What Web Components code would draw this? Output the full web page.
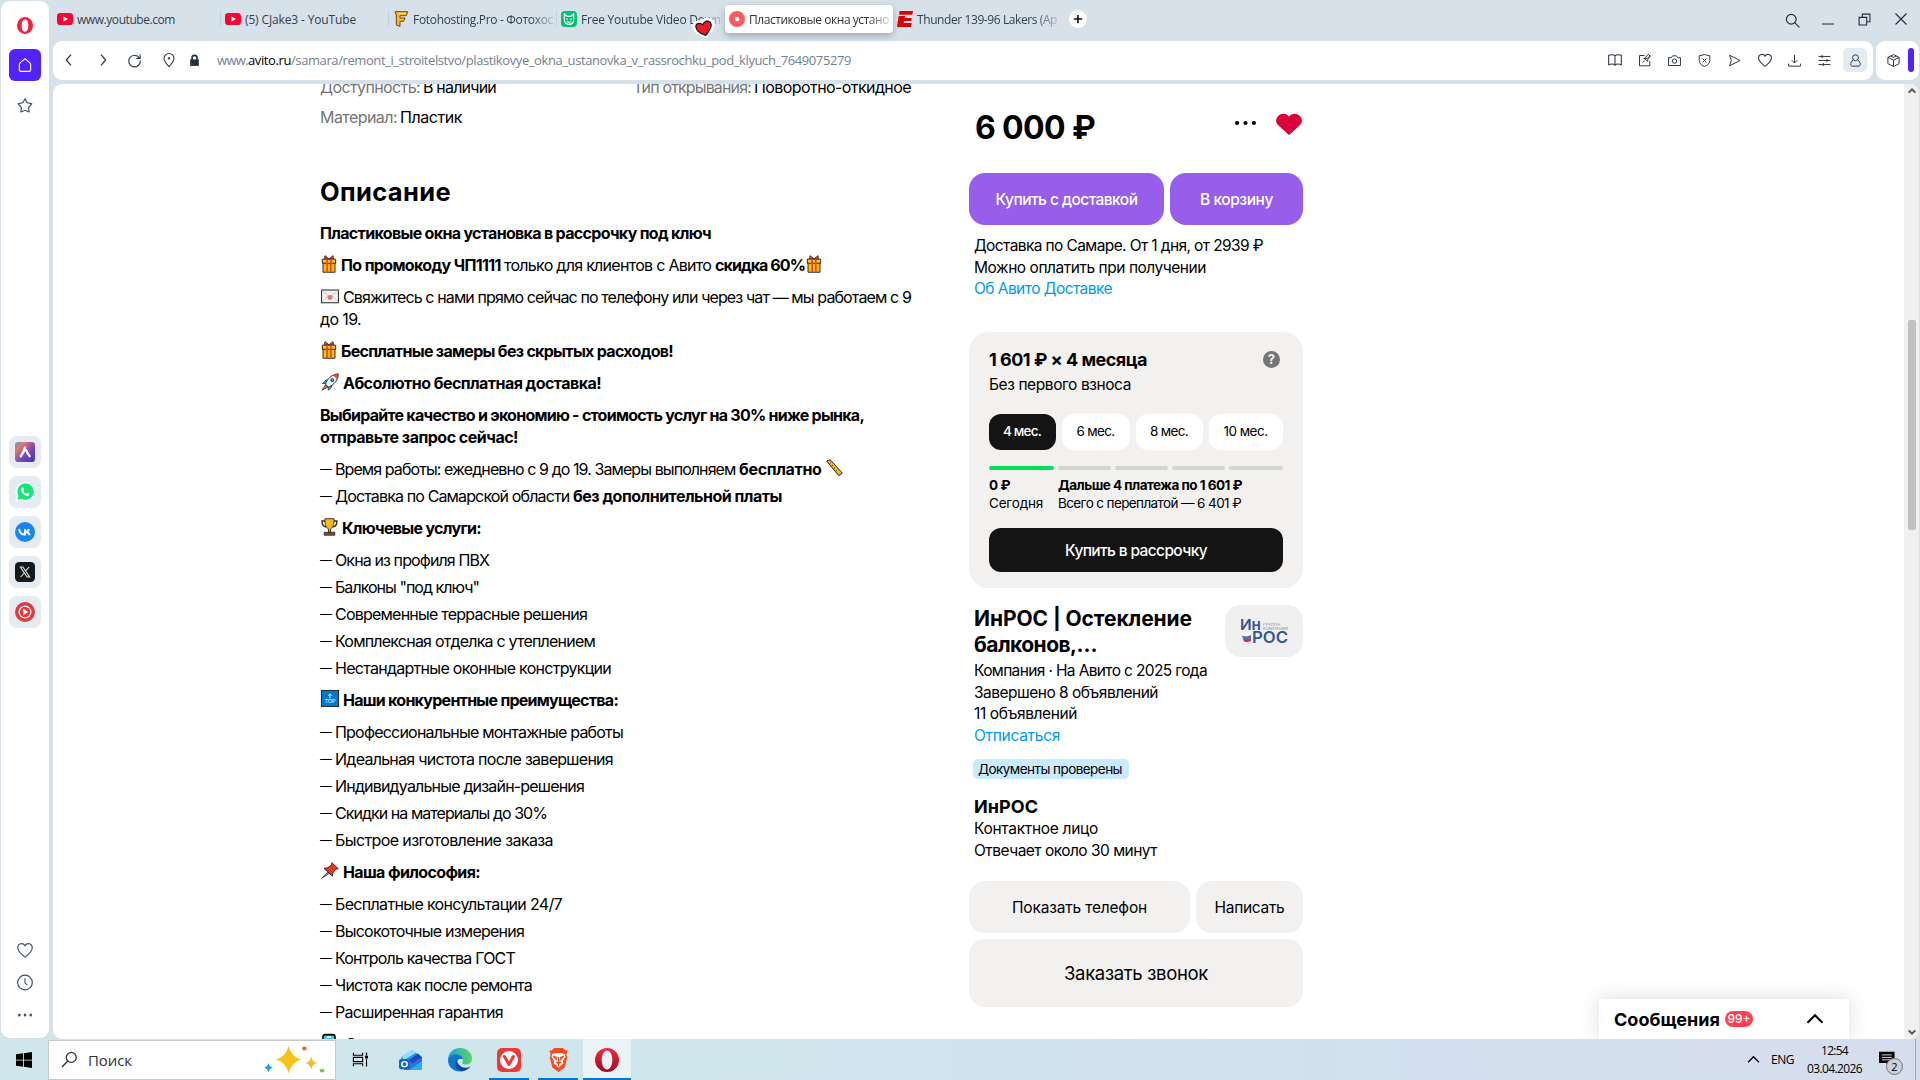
<!DOCTYPE html>
<html lang="ru">
<head>
<meta charset="utf-8">
<title>Пластиковые окна установка в рассрочку под ключ</title>
<style>
  html, body { margin: 0; padding: 0; }
  body {
    width: 1920px;
    height: 1080px;
    overflow: hidden;
    background: #d7e1ea;
    font-family: Inter, "Noto Sans", sans-serif;
    color: #000;
  }
</style>
</head>
<body>
<desktop-screen></desktop-screen>

<script>
//
const UI_FONT = `"Open Sans", "Noto Sans", sans-serif`;

/**
 * Registers an element whose shadow root is cloned from a template
 */
function define(tag, html) {
  const own_template = document.createElement("template");
  own_template.innerHTML = html;
  customElements.define(tag, class extends HTMLElement {
    constructor() {
      super();
      this.attachShadow({ mode: "open" });
    }
    connectedCallback() {
      if (this.shadowRoot.childNodes.length) return;
      this.shadowRoot.appendChild(own_template.content.cloneNode(true));
    }
  });
}

// stroke icons: line art, drawn with currentColor
const LINE = {
  back: `<path d="M15 4 8 12l7 8"/>`,
  forward: `<path d="m9 4 7 8-7 8"/>`,
  reload: `<path d="M19 8.500A8.200 8.200 0 1 0 20.200 12M20 3.500v5.500h-5.500"/>`,
  pin: `<path d="M12 22C8 17.500 4.500 13.800 4.500 9.700a7.500 7.500 0 0 1 15 0C19.500 13.800 16 17.500 12 22z"/><circle cx="12" cy="9.500" r="1" fill="currentColor"/>`,
  book: `<path d="M12 5.500C10 4 5 4 2.500 5v14c3-1 7.500-1 9.500.500zM12 5.500c2-1.500 7-1.500 9.500-.500v14c-3-1-7.500-1-9.500.500z"/>`,
  note: `<path d="M12 4H4v16.500h16.500V13M9 15.500l3.500-3.500M10.500 9l6-.500 4-4M12 8.500l5 5 .500-4.500 4-3.500-3.500-3.500-4 4.500z"/>`,
  camera: `<path d="M2.500 7.500H7L9 4.500h6l2 3h4.500v12.500h-19z" stroke-linejoin="round"/><circle cx="12" cy="13" r="3.500"/>`,
  shield: `<path d="M12 2.500 3.500 4.500V12c0 5 4 8 8.500 9.500 4.500-1.500 8.500-4.500 8.500-9.500V4.500zM9 9l6 6M15 9l-6 6"/>`,
  send: `<path d="M4 3.500 21 12 4 20.500 7 12z" stroke-linejoin="round"/>`,
  heart: `<path d="M12 21.500C8 18.500 2.300 13.700 2.300 8.700A5.200 5.200 0 0 1 12 6.200a5.200 5.200 0 0 1 9.700 2.500c0 5-5.700 9.800-9.700 12.800z"/>`,
  download: `<path d="M12 3v12.500M7.500 11.500 12 16l4.500-4.500M2.500 17v4h19v-4"/>`,
  sliders: `<path d="M2.500 5.500h19M2.500 12h19M2.500 18.500h19M8 3v5M16 9.500v5M10 16v5"/>`,
  user: `<circle cx="12" cy="7.500" r="4.700"/><path d="M8.500 11C5.500 13 4.300 16 4.300 18.500c0 1.500 1 2.500 2.500 2.500h10.400c1.500 0 2.500-1 2.500-2.500 0-2.500-1.200-5.500-4.200-7.500"/>`,
  cube: `<path d="M12 2.500 21 7v10l-9 4.500L3 17V7zM3 7l9 4.500L21 7M12 11.500v10M7.500 4.700 12 7l4.500-2.300" stroke-linejoin="round"/>`,
  search: `<circle cx="10" cy="10" r="7.800"/><path d="m15.500 15.500 7.500 7.500"/>`,
  finder: `<circle cx="14.500" cy="9" r="7"/><path d="M9.500 14 1.500 22.500"/>`,
  minimize: `<path d="M0 22h24"/>`,
  restore: `<path d="M2 8h14v14H2zM8 8V2h14v14h-6"/>`,
  close: `<path d="m1 1 22 22M23 1 1 23"/>`,
  home: `<path d="M12 2.500 5 8.500C4 9.500 3.500 11 3.500 12v7c0 1.500 1 2.500 2.500 2.500h12c1.500 0 2.500-1 2.500-2.500v-7c0-1-.500-2.500-1.500-3.500z" stroke-linejoin="round"/>`,
  star: `<path d="m12 2 3.200 5.800 7 1.600-4.700 5.300.6 7-6.100-2.500-6.100 2.500.6-7-4.700-5.300 7-1.600z" stroke-linejoin="round"/>`,
  clock: `<circle cx="12" cy="12" r="11"/><path d="M12 5.500v7l3.500 3.500"/>`,
  up: `<path d="m2 17 10-10 10 10"/>`,
  taskview: `<path d="M2 2.500v3.500h13V2.500M2 21.500V18h13v3.500M2 9h13v6H2zM20.500 2v4M20.500 11v11"/><path d="M18.500 6.500h4v4h-4z" fill="currentColor" stroke="none"/>`,
};

// filled artwork, with its own colours
const ART = {
  lock: `<path d="M4 10h16v12H4z" fill="#252f3a"/><path d="M7.500 11V7a4.500 4.500 0 0 1 9 0v4" fill="none" stroke="#252f3a" stroke-width="3"/>`,
  dots: `<g fill="#444f5c"><circle cx="3.500" cy="12" r="2"/><circle cx="12" cy="12" r="2"/><circle cx="20.500" cy="12" r="2"/></g>`,
  more: `<g fill="#000"><circle cx="2.400" cy="12" r="2.400"/><circle cx="12" cy="12" r="2.400"/><circle cx="21.600" cy="12" r="2.400"/></g>`,
  like: `<path d="M12 22 1.800 11.900A6 6 0 0 1 1.600 3.600 6.200 6.200 0 0 1 12 3.700a6.200 6.200 0 0 1 10.400-.1 6 6 0 0 1-.2 8.300z" fill="#db0037"/>`,
  opera: `<path fill-rule="evenodd" d="M12 0a12 12 0 1 0 0 24 12 12 0 0 0 0-24zm0 3.200c3 0 5 4 5 8.800s-2 8.800-5 8.800-5-4-5-8.800 2-8.800 5-8.800z" fill="#fa1e3a"/>`,
  operabig: `<defs><linearGradient id="o" x2="0" y2="1"><stop offset="0" stop-color="#f5283c"/><stop offset="1" stop-color="#a5091e"/></linearGradient></defs><path fill-rule="evenodd" d="M12 0a12 12 0 1 0 0 24 12 12 0 0 0 0-24zm0 2.500c3.200 0 5.300 4.300 5.300 9.500s-2.100 9.500-5.300 9.500-5.300-4.300-5.300-9.500S8.800 2.500 12 2.500z" fill="url(#o)"/>`,
  youtube: `<rect y="3" width="24" height="18" rx="5" fill="#ff0033"/><path d="m9.500 8 7 4-7 4z" fill="#fff"/>`,
  foto: `<path d="M3 1h19l-2 6H10.500v3.500H18l-2 5h-5.500V23L5 21V6z" fill="#ffb62e" stroke="#6b4a16" stroke-width="1.500"/><path d="M8.500 4h10" stroke="#ffe19b" stroke-width="1.500"/>`,
  cat: `<rect width="24" height="24" rx="6" fill="#00c26e"/><path d="M5 4l4 4h6l4-4v9c0 5-3 7-7 7s-7-2-7-7z" fill="none" stroke="#fff" stroke-width="1.800" stroke-linejoin="round"/><path d="M9 11v3M15 11v3M9 16c2 1.500 4 1.500 6 0" stroke="#fff" stroke-width="1.600" fill="none"/>`,
  record: `<circle cx="12" cy="12" r="12" fill="#ff5a5f"/><circle cx="12" cy="12" r="3.500" fill="#fff"/>`,
  espn: `<path d="M4 0h20l-1 5.500H3zM2.500 7.500H12l-.500 3H22l-.800 4.500H10.500l-.500 3h12L21 24H0z" fill="#d00"/>`,
  plus: `<circle cx="12" cy="12" r="12" fill="#fff"/><path d="M12 6.500v11M6.500 12h11" stroke="#111" stroke-width="2.200"/>`,
  cursor: `<path d="M12 22C5 18 1 12.500 2 7.500 3 3 9 2.500 11.500 6 14 1.500 20 1.500 22 6c2 5-4 11.500-10 16z" transform="rotate(-12 12 12)" fill="#fff" stroke="#fff" stroke-width="4" stroke-linejoin="round"/><path d="M12 21C6 17 3 12 3.800 8 5 4.500 9 4.500 11.500 8 14 3.500 18.500 3.500 20.200 7c1.500 4-3 9.500-8.200 14z" transform="rotate(-12 12 12)" fill="#ed1c24" stroke="#2b1114" stroke-width="1.500"/>`,
  aria: `<defs><linearGradient id="a" x2="1" y2="1"><stop offset="0" stop-color="#5a9dde"/><stop offset=".25" stop-color="#df796b"/><stop offset=".6" stop-color="#7746c2"/><stop offset="1" stop-color="#3c3caa"/></linearGradient></defs><rect width="24" height="24" rx="4" fill="url(#a)"/><path d="M12 6.500 10.500 11 7 17M13.500 10l1.500 3.500 2.500 3.500" fill="none" stroke="#fff" stroke-width="2.800" stroke-linecap="round"/>`,
  whatsapp: `<path d="M.5 23.800 2 17.500A11.700 11.700 0 1 1 7 22.200z" fill="#fff"/><path d="m4 20.500 1-4A8.900 8.900 0 1 1 8.300 19.700z" fill="#15e776"/><path d="M2.800 21.200 4.200 16.300A9.800 9.800 0 1 1 8 20z" fill="#15e776"/><path d="M8.500 6.500 7 8.500c.500 4.500 4 8 8.500 8.500l2-2.500-3-1.700-1.500 1.200c-1.500-.800-2.500-1.800-3-3.200L11.200 9.500 10 6.500z" fill="#fff"/>`,
  vk: `<circle cx="12" cy="12" r="12" fill="#1586f7"/><path d="M5 8.500c.500 4.500 3 6.500 7 6.500V8.500M12 12c2.500 0 4-1.500 4.800-3.500M13 12c2.500.200 3.800 1.500 4.800 3.800" fill="none" stroke="#fff" stroke-width="2.400"/>`,
  xcom: `<rect width="24" height="24" rx="5" fill="#16181b"/><path d="M6.500 6h3l8 12h-3zM17 6l-4.500 5M11 13.500 6.700 18" fill="none" stroke="#e5e7ea" stroke-width="1.300"/>`,
  ytmusic: `<circle cx="12" cy="12" r="12" fill="#e13b42"/><circle cx="12" cy="12" r="7" fill="none" stroke="#fff" stroke-width="1.500"/><path d="m9.800 8 6 4-6 4z" fill="#fff"/>`,
  windows: `<path d="M0 3.500 10.500 2v9.500H0zM11.800 1.800 24 0v11.500H11.800zM0 12.700h10.500V22.200L0 20.700zM11.800 12.700H24V24l-12.200-1.800z" fill="#000"/>`,
  outlook: `<defs><linearGradient id="l" x2="1" y2="1"><stop offset="0" stop-color="#4bb3f6"/><stop offset="1" stop-color="#105bd8"/></linearGradient></defs><path d="M2 9 13 1l10 8v12a2 2 0 0 1-2 2H5z" fill="url(#l)"/><path d="m3 8 10-7 4 3-12 8z" fill="#8fdcff"/><path d="m10 12 9-7 4 4-10 7z" fill="#1d49bd"/><path d="m10 23 13-10v8a2 2 0 0 1-2 2z" fill="#32a8f5"/><rect y="11" width="11" height="11" rx="2" fill="#0b67d2"/><circle cx="5.500" cy="16.500" r="2.700" fill="none" stroke="#fff" stroke-width="1.500"/>`,
  edge: `<defs><linearGradient id="e" x2="1"><stop offset="0" stop-color="#1ba0dc"/><stop offset="1" stop-color="#5cd65a"/></linearGradient></defs><path d="M0 12C0 5 5 0 12 0s12 5 12 10.500c0 4-3 6-6.300 6-3.200 0-3.700-1.200-3.400-2C16.500 11 14 8 10 8 5 8 1 11 0 12z" fill="url(#e)"/><path d="M0 12c1-4 5-6 9-5.500 4 .500 6 3 6 5-3-2-6 0-6 3.500 0 4 4 7.500 8.500 7C11 26 0 22 0 12z" fill="#0e76cf"/><path d="M8.500 11.500c-3 6 1 12 7 11.500 3-.500 5.500-2.500 7-4.500-5 2.500-12 1.500-14-7z" fill="#12459c"/>`,
  vivaldi: `<rect width="24" height="24" rx="5" fill="#ef3939"/><circle cx="12" cy="12" r="9" fill="#fff"/><path d="m7.500 8.500 4.500 8 3.500-6.500" fill="none" stroke="#ef3939" stroke-width="3" stroke-linecap="round" stroke-linejoin="round"/><circle cx="16.200" cy="8.700" r="1.700" fill="#ef3939"/>`,
  brave: `<path d="m7 0-3 2.500H1.500L3 6.500l-1 3 3 10L12 24l7-4.500 3-10-1-3 1.500-4H20L17 0z" fill="#fb4c1e"/><path d="m5 6 4-1h6l4 1 1 3-3 4 .500 2.500-3 2L12 20l-2.500-2.500-3-2L7 13 4 9z" fill="#fff"/><path d="m6 8 4 1.500-.500 2zM18 8l-4 1.500.500 2zM12 9v6M9 14l3 2 3-2M12 16v2.500" stroke="#fb4c1e" stroke-width="1.200" fill="#fb4c1e" />`,
  gift: `<path d="M3 9h18v14H3z" fill="#fdb913" stroke="#222" stroke-width="1.300"/><path d="M2 5.500h20V11H2z" fill="#ffc21c" stroke="#222" stroke-width="1.300"/><path d="M8 5.500h2.500V23H8zM13.500 5.500H16V23h-2.500z" fill="#eb4a1c"/><path d="M12 5 6 .800 5 5zM12 5l6-4.200L19 5z" fill="#f0431b" stroke="#222"/>`,
  envelope: `<rect x=".700" y="4" width="22.600" height="17" fill="#f1f1f1" stroke="#333" stroke-width="1.400"/><path d="m1 4.500 11 9 11-9M1 20l8-8M23 20l-8-8" fill="none" stroke="#bbb"/><circle cx="12" cy="14" r="3.300" fill="#e9776c"/>`,
  rocket: `<path d="m2 14 5-5 4 1 4 4-1 5-4 4-1-5-4-4z" fill="#35b5e9" stroke="#222"/><path d="M6 15C8 8 14 2 23 1c0 8-5 14-13 18z" fill="#f0f0f0" stroke="#222" stroke-width="1.200"/><path d="m16 3 7-2c0 3-1 5-1.500 7z" fill="#ef3c24"/><circle cx="15" cy="9.500" r="2" fill="#3b9fe0" stroke="#222"/><path d="M6 16 1 23l8-4z" fill="#f97d1c" stroke="#222"/>`,
  ruler: `<path d="m1 3 5-2 17 19-5 3.500z" fill="#fdb913" stroke="#222" stroke-width="1.400"/><path d="m7 5-2 1.500M10 8.500 8 10M13 12l-2 1.500M16 15.500 14 17" stroke="#222"/>`,
  trophy: `<path d="M6 4H1.500c0 5 2 7.500 6 8M18 4h4.500c0 5-2 7.500-6 8" fill="none" stroke="#3a2d12" stroke-width="2"/><path d="M5.500 1h13c0 8-1.500 12-5 13.500V19h-3v-4.500C7 13 5.500 9 5.500 1z" fill="#fdb913" stroke="#222" stroke-width="1.200"/><path d="M4.500 19h15v4h-15z" fill="#7a4a2c" stroke="#222"/>`,
  top: `<rect x=".600" y=".600" width="22.800" height="22.800" fill="#0078d7" stroke="#222" stroke-width="1.300"/><path d="M12 12V6M9.500 8 12 5.500 14.500 8" stroke="#fff" fill="none" stroke-width="1.300"/><text x="12" y="19" font-size="7" text-anchor="middle" fill="#fff" font-family="Inter">TOP</text>`,
  pushpin: `<path d="m1 23 8-9 2 2z" fill="#999" stroke="#222"/><path d="m4 9 5-1 5-4 .500-3L23 9.500 20 10l-4 5-1 5z" fill="#e5371c" stroke="#222" stroke-width="1.200"/>`,
  phone: `<rect x="3" y="1" width="18" height="22" rx="3" fill="#4fc8f0" stroke="#111" stroke-width="2.500"/><path d="M9 4h6" stroke="#fff" stroke-width="2"/>`,
  sparkle: `<g><path d="M27 0q3 13 13 16-10 3-13 16-3-13-13-16Q24 13 27 0z" transform="translate(-2)" fill="#f8c21c"/><path d="M48 12q1 7 6 8-5 1-6 8-1-7-6-8 5-1 6-8z" fill="#f9ba2a"/><path d="M4.500 20q1 4.500 4.500 5.500-3.500 1-4.500 5.500-1-4.500-4.500-5.500 3.500-1 4.500-5.500z" fill="#1ba1e6"/><circle cx="41" cy="3" r="2.300" fill="#f2682c"/><circle cx="59" cy="29" r="2.300" fill="#7ec242"/></g>`,
  notice: `<path d="M0 1h22v16h-6v6l-6-6H0z" fill="#000"/><path d="M4 5.500h14M4 9h14M4 12.500h14" stroke="#dfe6ef" stroke-width="1.300"/>`,
};

/**
 * <app-icon name size w>: one svg out of the two sets above
 */
class AppIcon extends HTMLElement {
  constructor() {
    super();
    this.attachShadow({ mode: "open" });
  }
  connectedCallback() {
    const name = this.getAttribute("name");
    const h = this.getAttribute("size") || 16;
    const w = this.getAttribute("w") || h;
    const sw = this.getAttribute("stroke") || 1.6;
    const box = this.getAttribute("box") || "0 0 24 24";
    const line = LINE[name]
      ? `fill="none" stroke="currentColor" stroke-width="${sw}"`
      : `preserveAspectRatio="none"`;
    this.shadowRoot.innerHTML = /*html*/ `
<style>
  :host { display: inline-block; width: ${w}px; height: ${h}px; flex: none; }
  svg { display: block; overflow: visible; }
</style>
<svg width="${w}" height="${h}" viewBox="${box}" ${line}>${LINE[name] || ART[name]}</svg>`;
  }
}
customElements.define("app-icon", AppIcon);

/**
 * <fit-text w>: one line of text, tracked so that it fills w pixels
 */
class FitText extends HTMLElement {
  constructor() {
    super();
    this.attachShadow({ mode: "open" });
    // no line breaks in here: they would be drawn, because of white-space: pre
    this.shadowRoot.innerHTML =
      `<style>:host { display: inline-block; white-space: pre; } span { display: inline-block; }</style>` +
      `<span><slot></slot></span>`;
  }
  connectedCallback() {
    const target = parseFloat(this.getAttribute("w"));
    if (!target) return;
    const natural = this.shadowRoot.querySelector("span").getBoundingClientRect().width;
    const spacing = (target - natural) / this.textContent.length;
    this.style.letterSpacing = spacing.toFixed(3) + "px";
    this.style.width = target + "px";
  }
}
customElements.define("fit-text", FitText);

/* ---------- browser chrome ---------- */

define("side-bar", /*html*/ `
<style>
  :host {
    display: flex; flex-direction: column; align-items: center;
    width: 48px; height: 1037px; margin: 1px 0 0 1px;
    background: #fff; border-radius: 9px; color: #444f5c;
  }
  .home {
    display: flex; align-items: center; justify-content: center;
    width: 32px; height: 32px; border-radius: 6px; margin: 15px 0 16px;
    background: #5222ff; color: #fff;
  }
  .apps { display: flex; flex-direction: column; gap: 8px; margin-top: 322px; }
  .apps div {
    display: flex; align-items: center; justify-content: center;
    width: 32px; height: 32px; border-radius: 8px; background: #e4ebf1;
  }
  .foot { display: flex; flex-direction: column; align-items: center; gap: 15px; margin-top: 313px; }
</style>
<app-icon name="opera" size="17" w="16" style="margin-top:16px"></app-icon>
<div class="home"><app-icon name="home" size="16" stroke="1.700"></app-icon></div>
<app-icon name="star" size="17" w="16" stroke="1.800"></app-icon>
<div class="apps">
  <div><app-icon name="aria" size="20"></app-icon></div>
  <div><app-icon name="whatsapp" size="20"></app-icon></div>
  <div><app-icon name="vk" size="20"></app-icon></div>
  <div><app-icon name="xcom" size="20"></app-icon></div>
  <div><app-icon name="ytmusic" size="20"></app-icon></div>
</div>
<div class="foot">
  <app-icon name="heart" size="18" stroke="1.500"></app-icon>
  <app-icon name="clock" size="17" w="16" stroke="1.700"></app-icon>
  <app-icon name="dots" size="18" w="16"></app-icon>
</div>
`);

define("browser-tab", /*html*/ `
<style>
  :host {
    display: flex; align-items: center; gap: 4px; box-sizing: border-box;
    width: 168px; height: 28px; padding-left: 4px;
    font-size: 12px; color: #33404d; overflow: hidden;
  }
  :host([line]) { background: linear-gradient(#bfd3e2, #bfd3e2) right 0 center / 1px 18px no-repeat; }
  :host([active]) {
    background: #fff; border-radius: 4px; overflow: visible; color: #333;
    box-shadow: 0 3px 7px rgba(70, 90, 110, .4);
  }
  :host([fade]) .label {
    -webkit-mask-image: linear-gradient(90deg, #000 118px, transparent 146px);
    mask-image: linear-gradient(90deg, #000 118px, transparent 146px);
  }
</style>
<slot name="icon"></slot>
<div class="label"><slot></slot></div>
`);

define("tab-strip", /*html*/ `
<style>
  :host { display: flex; height: 41px; padding: 5px 13px 0 0; box-sizing: border-box; position: relative; font-family: ${UI_FONT}; }
  .plus { margin: 5px 0 0 8px; }
  .window { display: flex; margin: 6px 0 0 auto; gap: 24px; color: #222c36; padding-top: 2px; }
  .cursor { position: absolute; left: 640px; top: 18px; }
</style>
<browser-tab line><app-icon slot="icon" name="youtube" size="16"></app-icon><fit-text w="98">www.youtube.com</fit-text></browser-tab>
<browser-tab line><app-icon slot="icon" name="youtube" size="16"></app-icon><fit-text w="111">(5) CJake3 - YouTube</fit-text></browser-tab>
<browser-tab line fade><app-icon slot="icon" name="foto" size="16"></app-icon><fit-text w="140">Fotohosting.Pro - Фотохос</fit-text></browser-tab>
<browser-tab fade><app-icon slot="icon" name="cat" size="16"></app-icon><fit-text w="140">Free Youtube Video Down</fit-text></browser-tab>
<browser-tab active fade><app-icon slot="icon" name="record" size="16"></app-icon><fit-text w="140">Пластиковые окна устано</fit-text></browser-tab>
<browser-tab fade><app-icon slot="icon" name="espn" size="16"></app-icon><fit-text w="140">Thunder 139-96 Lakers (Ap</fit-text></browser-tab>
<app-icon class="plus" name="plus" size="18"></app-icon>
<div class="window">
  <app-icon name="search" size="15" stroke="1.900" style="margin-right:-2px"></app-icon>
  <app-icon name="minimize" size="12" stroke="2"></app-icon>
  <app-icon name="restore" size="13" stroke="2"></app-icon>
  <app-icon name="close" size="12" stroke="2.200"></app-icon>
</div>
<app-icon class="cursor" name="cursor" size="20" w="22"></app-icon>
`);

define("address-bar", /*html*/ `
<style>
  :host { display: flex; height: 39px; gap: 3px; color: #2f3a45; font-family: ${UI_FONT}; }
  .main, .extra { display: flex; align-items: center; background: #fff; border-radius: 9px; box-sizing: border-box; }
  .main { width: 1820px; padding: 0 6px 1px 8px; }
  .extra { width: 43px; padding: 0 5px 1px 10px; gap: 7px; }
  .nav { display: flex; align-items: center; gap: 18px; }
  .url { margin-left: 16px; font-size: 13px; color: #728292; display: flex; }
  .url b { font-weight: 400; color: #000; }
  .tools { display: flex; align-items: center; gap: 15px; margin-left: auto; }
  .user { display: flex; align-items: center; justify-content: center; width: 24px; height: 24px; margin-left: -4px; border-radius: 5px; background: #e4ebf2; }
  .bar { width: 6px; height: 24px; border-radius: 3px; background: #5222ff; }
</style>
<div class="main">
  <div class="nav">
    <app-icon name="back" size="16" stroke="1.900"></app-icon>
    <app-icon name="forward" size="16" stroke="1.900" style="margin-right:-3px"></app-icon>
    <app-icon name="reload" size="17"></app-icon>
    <app-icon name="pin" size="16"></app-icon>
    <app-icon name="lock" size="13" style="margin-left:-7px"></app-icon>
  </div>
  <div class="url"><fit-text w="31">www.</fit-text><b><fit-text w="43">avito.ru</fit-text></b><fit-text w="560">/samara/remont_i_stroitelstvo/plastikovye_okna_ustanovka_v_rassrochku_pod_klyuch_7649075279</fit-text></div>
  <div class="tools">
    <app-icon name="book" size="16" style="margin-right:-1px"></app-icon>
    <app-icon name="note" size="15"></app-icon>
    <app-icon name="camera" size="15"></app-icon>
    <app-icon name="shield" size="15"></app-icon>
    <app-icon name="send" size="15"></app-icon>
    <app-icon name="heart" size="16" style="margin-right:-1px"></app-icon>
    <app-icon name="download" size="15"></app-icon>
    <app-icon name="sliders" size="15"></app-icon>
    <div class="user"><app-icon name="user" size="15"></app-icon></div>
  </div>
</div>
<div class="extra"><app-icon name="cube" size="15"></app-icon><div class="bar"></div></div>
`);

define("scroll-bar", /*html*/ `
<style>
  :host { display: flex; flex-direction: column; align-items: center; width: 15px; height: 955px; background: #f0f0f0; border-radius: 0 9px 9px 0; color: #555; }
  .thumb { width: 8px; height: 210px; margin-top: 225px; background: #c1c1c1; border-radius: 2px; }
  .down { transform: rotate(180deg); margin-top: auto; margin-bottom: 3px; }
</style>
<app-icon name="up" size="8" stroke="6" style="margin-top:3px"></app-icon>
<div class="thumb"></div>
<app-icon class="down" name="up" size="8" stroke="6"></app-icon>
`);

/* ---------- left column ---------- */

const services = [["Окна из профиля ПВХ", 154], ["Балконы \"под ключ\"", 144], ["Современные террасные решения", 252], ["Комплексная отделка с утеплением", 260], ["Нестандартные оконные конструкции", 276]];
const benefits = [["Профессиональные монтажные работы", 288], ["Идеальная чистота после завершения", 278], ["Индивидуальные дизайн-решения", 249], ["Скидки на материалы до 30%", 212], ["Быстрое изготовление заказа", 218]];
const values = [["Бесплатные консультации 24/7", 227], ["Высокоточные измерения", 189], ["Контроль качества ГОСТ", 180], ["Чистота как после ремонта", 197], ["Расширенная гарантия", 168]];
const list = (rows) => `<ul>${rows.map(([text, w]) => `<li><i>—</i><fit-text w="${w}">${text}</fit-text></li>`).join("")}</ul>`;

define("item-description", /*html*/ `
<style>
  :host { display: block; width: 600px; font-size: 16px; line-height: 22px; }
  .params { display: grid; grid-template-columns: 313px auto; row-gap: 8px; margin-top: -8px; }
  .params div { display: flex; gap: 3px; }
  .params i { font-style: normal; color: #757575; }
  h2 { margin: 48px 0 14px; font-size: 25.500px; line-height: 32px; font-weight: 700; }
  p { display: flex; margin: 0 0 10px; height: 22px; }
  p.two { flex-direction: column; height: 44px; }
  p.two div { display: flex; }
  ul { list-style: none; margin: 0 0 10px; padding: 0; display: grid; row-gap: 5px; }
  li { display: flex; height: 22px; }
  li i { width: 15px; font-style: normal; font-size: 12px; }
  b { font-weight: 700; }
  app-icon { margin: 1px 4px 0 1px; }
</style>
<div class="params">
  <div><i><fit-text w="100">Доступность:</fit-text></i><fit-text w="73">В наличии</fit-text></div>
  <div><i><fit-text w="118">Тип открывания:</fit-text></i><fit-text w="157">Поворотно-откидное</fit-text></div>
  <div><i><fit-text w="77">Материал:</fit-text></i><fit-text w="62">Пластик</fit-text></div>
</div>
<h2><fit-text w="131">Описание</fit-text></h2>
<p><b><fit-text w="391">Пластиковые окна установка в рассрочку под ключ</fit-text></b></p>
<p><app-icon name="gift" size="18" w="16"></app-icon><b><fit-text w="163">По промокоду ЧП1111 </fit-text></b><fit-text w="211">только для клиентов с Авито </fit-text><b><fit-text w="90">скидка 60%</fit-text></b><app-icon name="gift" size="18" w="16"></app-icon></p>
<p class="two"><span style="display:flex"><app-icon name="envelope" size="18" w="18"></app-icon><fit-text w="568">Свяжитесь с нами прямо сейчас по телефону или через чат — мы работаем с 9</fit-text></span><fit-text w="41">до 19.</fit-text></p>
<p><app-icon name="gift" size="18" w="16"></app-icon><b><fit-text w="332">Бесплатные замеры без скрытых расходов!</fit-text></b></p>
<p><app-icon name="rocket" size="18"></app-icon><b><fit-text w="258">Абсолютно бесплатная доставка!</fit-text></b></p>
<p class="two"><b><fit-text w="544">Выбирайте качество и экономию - стоимость услуг на 30% ниже рынка,</fit-text></b><b><fit-text w="198">отправьте запрос сейчас!</fit-text></b></p>
<ul>
  <li><i>—</i><fit-text w="404">Время работы: ежедневно с 9 до 19. Замеры выполняем </fit-text><b><fit-text w="86">бесплатно </fit-text></b><app-icon name="ruler" size="17"></app-icon></li>
  <li><i>—</i><fit-text w="238">Доставка по Самарской области </fit-text><b><fit-text w="209">без дополнительной платы</fit-text></b></li>
</ul>
<p><app-icon name="trophy" size="18" w="17"></app-icon><b><fit-text w="139">Ключевые услуги:</fit-text></b></p>
${list(services)}
<p><app-icon name="top" size="17" w="18"></app-icon><b><fit-text w="275">Наши конкурентные преимущества:</fit-text></b></p>
${list(benefits)}
<p><app-icon name="pushpin" size="17" w="18"></app-icon><b><fit-text w="137">Наша философия:</fit-text></b></p>
${list(values)}
<p><app-icon name="phone" size="18" w="16"></app-icon><b>&nbsp;С</b></p>
`);

/* ---------- right column ---------- */

define("ui-button", /*html*/ `
<style>
  :host {
    display: flex; align-items: center; justify-content: center;
    box-sizing: border-box; height: 52px; border-radius: 16px;
    background: #f2f1f0; color: #000; font-size: 15.500px; white-space: nowrap;
  }
  :host([kind="violet"]) { background: #965eeb; color: #fff; font-weight: 500; }
  :host([kind="black"]) { height: 44px; border-radius: 12px; background: #141414; color: #fff; font-weight: 500; }
  :host([kind="big"]) { height: 68px; font-size: 18.500px; }
</style>
<slot></slot>
`);

define("month-chip", /*html*/ `
<style>
  :host { display: flex; align-items: center; justify-content: center; height: 36px; box-sizing: border-box; padding: 0 1px 2px 0; border-radius: 12px; background: #fff; font-size: 13.500px; }
  :host([selected]) { background: #141414; color: #fff; font-weight: 500; }
</style>
<slot></slot>
`);

define("installment-card", /*html*/ `
<style>
  :host { display: block; box-sizing: border-box; height: 256px; padding: 16px 20px 0; border-radius: 20px; background: #f2f1f0; }
  header { display: flex; height: 24px; justify-content: space-between; font: 700 18px/24px Inter; }
  .help { width: 17px; height: 17px; margin: 3px 3px 0 0; border-radius: 50%; background: #757575; color: #f2f1f0; font: 700 13px/17px Inter; text-align: center; }
  .sub { height: 22px; margin-top: 2px; font-size: 15.500px; line-height: 21.600px; }
  .chips { display: grid; grid-template-columns: 67px 68px 67px 74px; gap: 6px; margin-top: 18px; }
  .bars { display: grid; grid-template-columns: 65px 53px 53px 53px 54px; gap: 4px; margin: 16px 0 6px; }
  .bars i { height: 4px; border-radius: 2px; background: #d4d4d3; }
  .bars i:first-child { background: #02e15c; }
  .sums { display: grid; grid-template-columns: 69px auto; grid-auto-rows: 18px; font-size: 13.500px; line-height: 18px; margin-bottom: 16px; }
  .sums b { display: flex; }
</style>
<header><fit-text w="158">1 601 ₽ × 4 месяца</fit-text><div class="help">?</div></header>
<div class="sub"><fit-text w="142">Без первого взноса</fit-text></div>
<div class="chips">
  <month-chip selected><fit-text w="38">4 мес.</fit-text></month-chip>
  <month-chip><fit-text w="38">6 мес.</fit-text></month-chip>
  <month-chip><fit-text w="38">8 мес.</fit-text></month-chip>
  <month-chip><fit-text w="44">10 мес.</fit-text></month-chip>
</div>
<div class="bars"><i></i><i></i><i></i><i></i><i></i></div>
<div class="sums">
  <b><fit-text w="21">0 ₽</fit-text></b><b><fit-text w="184">Дальше 4 платежа по 1 601 ₽</fit-text></b>
  <fit-text w="54">Сегодня</fit-text><fit-text w="183">Всего с переплатой — 6 401 ₽</fit-text>
</div>
<ui-button kind="black"><fit-text w="142">Купить в рассрочку</fit-text></ui-button>
`);

define("seller-logo", /*html*/ `
<style>
  :host { display: flex; align-items: center; justify-content: center; width: 78px; height: 52px; border-radius: 16px; background: #f0f0f0; }
</style>
<svg width="50" height="28" viewBox="0 0 50 28" font-family="Inter">
  <text x="1" y="12.500" font-size="15" font-weight="600" fill="#345794" textLength="21" lengthAdjust="spacingAndGlyphs">Ин</text>
  <text x="13" y="26" font-size="16" font-weight="600" fill="#345794" textLength="36" lengthAdjust="spacingAndGlyphs">РОС</text>
  <text x="24" y="8.500" font-size="4" fill="#888" textLength="17">ГРУППА</text>
  <text x="24" y="12.500" font-size="4" fill="#888" textLength="25">КОМПАНИЙ</text>
  <path d="M2 15.500q5 2 10-.500v3q-5 2-9 .500z" fill="#fff"/><path d="M3 18.500q5 2 9-.500v3q-5 2-8 .500z" fill="#4a6db0"/><path d="M4 21.500q4 1.500 8-.500v3q-4 1.500-7 .500z" fill="#c0323f"/>
</svg>
`);

define("seller-card", /*html*/ `
<style>
  :host { display: block; margin-top: 17px; font-size: 15.500px; line-height: 21.600px; }
  .head { display: flex; justify-content: space-between; height: 52px; }
  h3 { margin: 1px 0 0 5px; font: 700 21px/26px Inter; display: flex; flex-direction: column; }
  .lines { display: flex; flex-direction: column; margin: 3px 0 0 5px; }
  .link { color: #0099f7; }
  .badge { display: flex; align-items: center; width: 156px; height: 20px; margin: 12.600px 0 16px 4px; padding: 1px 0 0 5px; box-sizing: border-box; border-radius: 5px; background: #c9ebff; font-size: 13.500px; }
  h4 { margin: 0 0 0 5px; font: 700 18px/23px Inter; }
</style>
<div class="head"><h3><fit-text w="218">ИнРОС | Остекление</fit-text><fit-text w="123">балконов,…</fit-text></h3><seller-logo></seller-logo></div>
<div class="lines">
  <fit-text w="233">Компания · На Авито с 2025 года</fit-text>
  <fit-text w="184">Завершено 8 объявлений</fit-text>
  <fit-text w="103">11 объявлений</fit-text>
  <fit-text w="86" class="link">Отписаться</fit-text>
</div>
<div class="badge"><fit-text w="144">Документы проверены</fit-text></div>
<h4><fit-text w="64">ИнРОС</fit-text></h4>
<div class="lines" style="margin-top:0">
  <fit-text w="124">Контактное лицо</fit-text>
  <fit-text w="183">Отвечает около 30 минут</fit-text>
</div>
`);

define("item-sidebar", /*html*/ `
<style>
  :host { display: block; width: 334px; }
  .price { display: flex; height: 40px; margin: 24px 0 25px; padding-left: 6px; font: 700 32px/40px Inter; }
  .icons { display: flex; align-items: flex-start; gap: 20px; margin: 5px 1px 0 auto; }
  .row { display: grid; gap: 6px; }
  .delivery { display: flex; flex-direction: column; box-sizing: border-box; height: 107px; padding: 10.200px 0 0 5px; font-size: 15.500px; line-height: 21.600px; }
  .link { color: #0099f7; }
  .contact { margin: 20px 0 6px; }
</style>
<div class="price"><fit-text w="120">6 000 ₽</fit-text><div class="icons"><app-icon name="more" size="20" w="21"></app-icon><app-icon name="like" size="24" w="26"></app-icon></div></div>
<div class="row" style="grid-template-columns:195px 133px">
  <ui-button kind="violet"><fit-text w="142">Купить с доставкой</fit-text></ui-button>
  <ui-button kind="violet"><fit-text w="73">В корзину</fit-text></ui-button>
</div>
<div class="delivery">
  <fit-text w="289">Доставка по Самаре. От 1 дня, от 2939 ₽</fit-text>
  <fit-text w="232">Можно оплатить при получении</fit-text>
  <fit-text w="138" class="link">Об Авито Доставке</fit-text>
</div>
<installment-card></installment-card>
<seller-card></seller-card>
<div class="row contact" style="grid-template-columns:221px 107px">
  <ui-button><fit-text w="135">Показать телефон</fit-text></ui-button>
  <ui-button><fit-text w="70">Написать</fit-text></ui-button>
</div>
<ui-button kind="big"><fit-text w="144">Заказать звонок</fit-text></ui-button>
`);

define("messages-popup", /*html*/ `
<style>
  :host {
    position: absolute; right: 70px; bottom: 0; z-index: 2;
    display: flex; align-items: center; box-sizing: border-box;
    width: 250px; height: 40px; padding: 0 25px 0 15px;
    background: #fff; border-radius: 4px 4px 0 0; box-shadow: 0 0 22px rgba(0, 0, 0, .14);
    font-size: 18px; font-weight: 700;
  }
  .count { width: 28px; height: 16px; margin: 0 auto 0 5px; border-radius: 8px; background: #ff4053; color: #fff; font: 500 12px/16px Inter; text-align: center; }
</style>
<fit-text w="106">Сообщения</fit-text><div class="count">99+</div>
<app-icon name="up" size="18" stroke="2.800"></app-icon>
`);

define("web-page", /*html*/ `
<style>
  :host { display: flex; position: relative; width: 1866px; height: 955px; margin-top: 4px; background: #fff; border-radius: 9px; overflow: hidden; }
  item-description { margin-left: 267px; }
  item-sidebar { margin-left: 49px; }
  scroll-bar { margin-left: auto; }
</style>
<item-description></item-description>
<item-sidebar></item-sidebar>
<scroll-bar></scroll-bar>
<messages-popup></messages-popup>
`);

/* ---------- taskbar ---------- */

define("task-bar", /*html*/ `
<style>
  :host {
    display: flex; align-items: center; height: 41px; font-family: ${UI_FONT};
    background: linear-gradient(90deg, #cfe6ec 0, #d0e5ed 45%, #d3dfee 75%, #d5deec 100%);
  }
  .start { width: 48px; display: flex; justify-content: center; box-sizing: border-box; }
  .search { display: flex; align-items: center; box-sizing: border-box; width: 288px; height: 40px; padding: 0 11px 0 12px; background: #fff; border: 1px solid #c5cacd; font-size: 15px; color: #333; }
  .search fit-text { margin-left: 10px; }
  .search app-icon:last-child { margin-left: auto; }
  .app { display: flex; align-items: center; justify-content: center; box-sizing: border-box; width: 40px; height: 41px; padding-top: 2px; border-bottom: 2px solid transparent; }
  .open { border-color: #0078d7; }
  .current { width: 48px; background: #eaf4f8; }
  .apps { display: flex; gap: 9px; margin-left: 5px; }
  .tray { display: flex; align-items: center; margin-left: auto; font-size: 12px; }
  .time { display: flex; flex-direction: column; align-items: center; line-height: 18px; margin: 0 17px 0 13px; }
  .bell { position: relative; width: 36px; }
  .bell app-icon { display: block; }
  .bell span { position: absolute; left: 7px; top: 7px; width: 15px; height: 15px; border: 1px solid #777; border-radius: 50%; background: #cbcfd6; font-size: 11px; line-height: 15px; text-align: center; }
  .edge { height: 41px; width: 4px; border-left: 1px solid #9aa7b8; }
</style>
<div class="start"><app-icon name="windows" size="16"></app-icon></div>
<div class="search"><app-icon name="finder" size="17" stroke="1.900"></app-icon><fit-text w="44">Поиск</fit-text><app-icon name="sparkle" size="28" w="60" box="0 0 61 33"></app-icon></div>
<div class="apps">
  <div class="app" style="margin-left:-1px"><app-icon name="taskview" size="17" stroke="1.600"></app-icon></div>
  <div class="app" style="margin-left:2px"><app-icon name="outlook" size="22" w="24"></app-icon></div>
  <div class="app"><app-icon name="edge" size="24"></app-icon></div>
  <div class="app open"><app-icon name="vivaldi" size="24"></app-icon></div>
  <div class="app open"><app-icon name="brave" size="24" w="21"></app-icon></div>
  <div class="app open current" style="margin-left:-4px"><app-icon name="operabig" size="24"></app-icon></div>
</div>
<div class="tray">
  <app-icon name="up" size="13" stroke="2.400" style="margin-right:11px"></app-icon>
  <fit-text w="23">ENG</fit-text>
  <div class="time"><fit-text w="27">12:54</fit-text><fit-text w="55">03.04.2026</fit-text></div>
  <div class="bell"><app-icon name="notice" size="17"></app-icon><span>2</span></div>
  <div class="edge"></div>
</div>
`);

define("desktop-screen", /*html*/ `
<style>
  :host { display: flex; flex-direction: column; width: 1920px; height: 1080px; background: #d7e1ea; overflow: hidden; }
  .browser { display: flex; height: 1039px; }
  .main { margin-left: 4px; width: 1867px; }
</style>
<div class="browser">
  <side-bar></side-bar>
  <div class="main">
    <tab-strip></tab-strip>
    <address-bar></address-bar>
    <web-page></web-page>
  </div>
</div>
<task-bar></task-bar>
`);
</script>
</body>
</html>
